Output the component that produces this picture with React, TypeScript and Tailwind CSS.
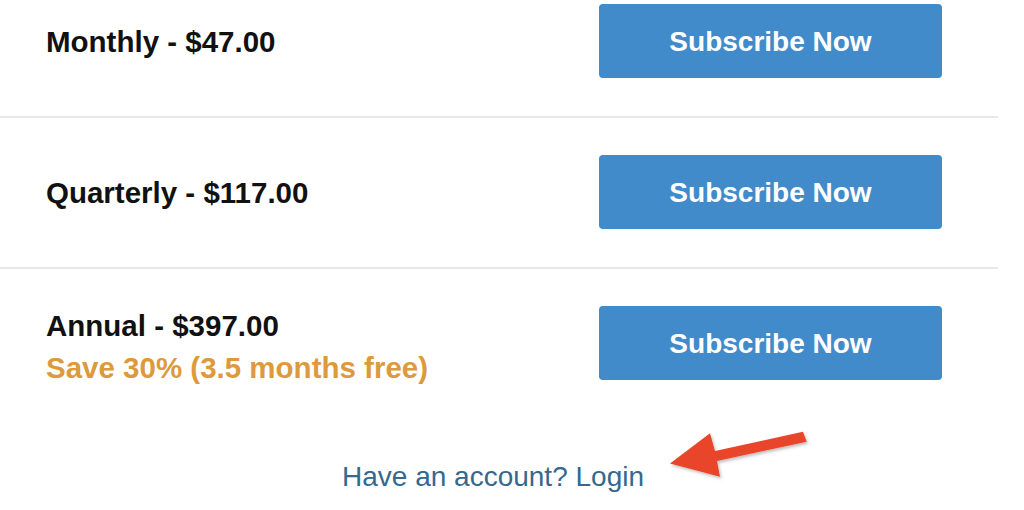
import React from "react";

const plans = [
  { label: "Monthly - $47.00" },
  { label: "Quarterly - $117.00" },
  { label: "Annual - $397.00", note: "Save 30% (3.5 months free)" },
];

function Arrow() {
  return (
    <svg
      className="absolute left-[660px] top-[425px] h-[60px] w-[155px]"
      viewBox="660 425 155 60"
    >
      <defs>
        <filter id="shadow" x="-10%" y="-20%" width="130%" height="150%">
          <feDropShadow dx="1.5" dy="2" stdDeviation="1.5" floodColor="#000" floodOpacity="0.25" />
        </filter>
      </defs>
      <polygon
        points="670,463.5 710,433.3 715,451 803,431.7 806.7,441.7 717,461 720,476.7"
        fill="#e8452a"
        filter="url(#shadow)"
      />
    </svg>
  );
}

export default function App() {
  return (
    <div className="relative h-[510px] w-[1024px] overflow-hidden bg-white font-['Liberation_Sans',Arial,sans-serif]">
      <div className="w-[998px]">
        {plans.map((plan, i) => (
          <div
            key={plan.label}
            className={`flex items-center justify-between pl-[46px] pr-[56px] ${
              i === 0 ? "pt-[4px]" : "pt-[37px]"
            } ${i < plans.length - 1 ? "border-b-2 border-[#e8e8e8] pb-[38px]" : ""}`}
          >
            {plan.note ? (
              <div className="-my-[10px] pt-[7px] text-[29.5px] font-bold leading-[42px]">
                <p className="text-[#111]">{plan.label}</p>
                <p className="text-[#dd9a3c]">{plan.note}</p>
              </div>
            ) : (
              <p className="pt-[2px] text-[29.5px] font-bold text-[#111]">{plan.label}</p>
            )}
            <button className="h-[74px] w-[343px] rounded-[4px] bg-[#428bca] pt-[2px] text-[28px] font-bold text-white">
              Subscribe Now
            </button>
          </div>
        ))}
        <p className="mt-[81px] pr-[12px] text-center text-[28px] leading-[32px] text-[#36688f]">
          Have an account? Login
        </p>
      </div>
      <Arrow />
    </div>
  );
}
